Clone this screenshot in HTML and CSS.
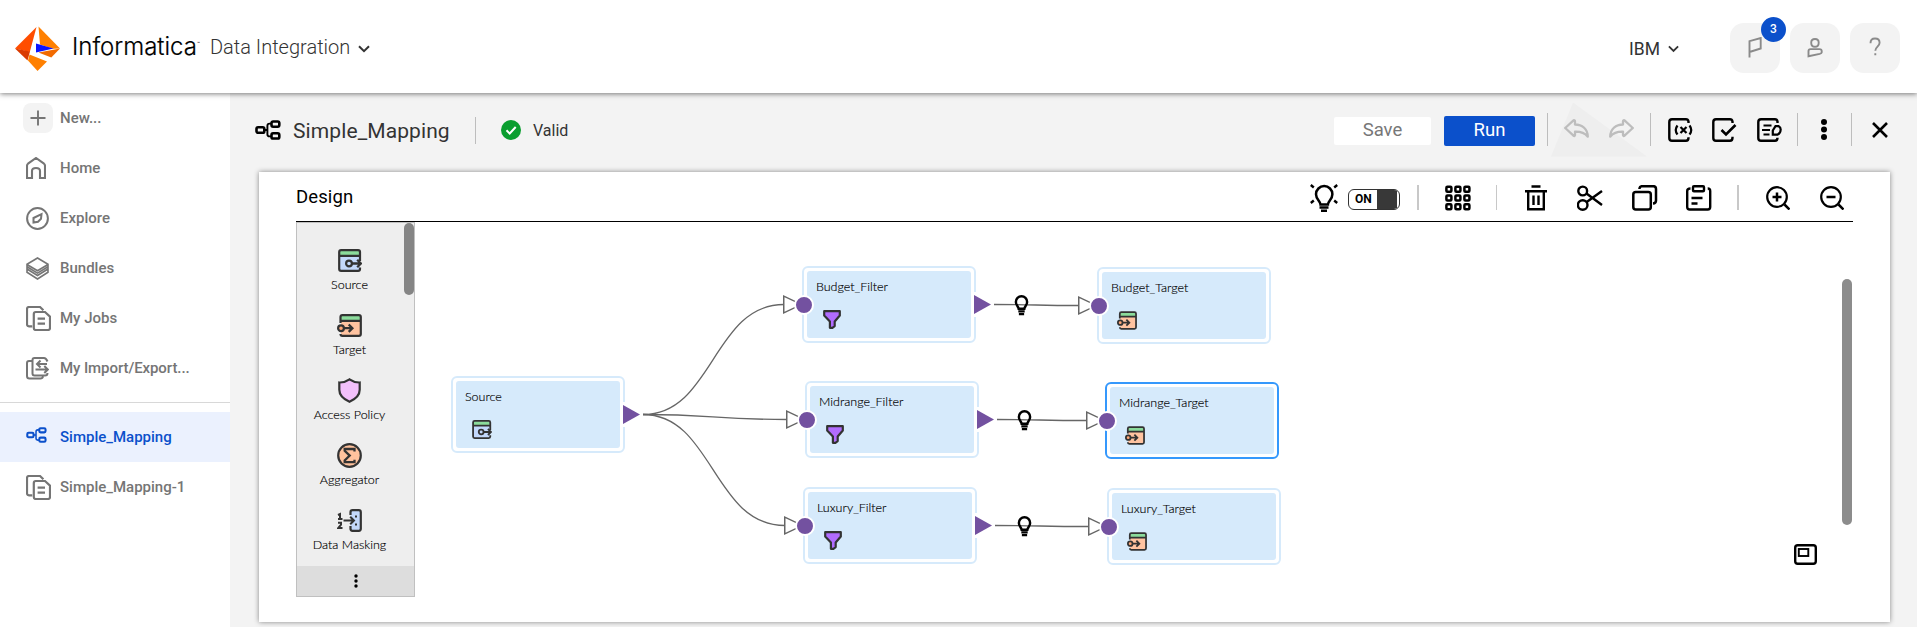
FILE: index.html
```
<!DOCTYPE html>
<html lang="en">
<head>
<meta charset="utf-8">
<title>Data Integration - Simple_Mapping</title>
<link rel="stylesheet" href="styles.css">
</head>
<body>
<svg class="defs" width="0" height="0">
  <symbol id="mapping" viewBox="0 0 26 20"><g fill="none" stroke="currentColor" stroke-width="2.600"><rect x="1.500" y="7.200" width="7.800" height="5.600" rx="1.600"/><rect x="16.500" y="1.500" width="7.800" height="5.200" rx="1.600"/><rect x="16.500" y="13.300" width="7.800" height="5.200" rx="1.600"/><path d="M9 10h3.400M16 3.600h-1.400q-2.200 0-2.200 2.200v8.400q0 2.200 2.200 2.200H16" stroke-width="1.900"/></g></symbol>
  <symbol id="docs" viewBox="0 0 25 25"><path d="M6.200 20.300H3q-2 0-2-2V3q0-2 2-2h11l3.400 3.200M7.800 8q0-2 2-2H19l5 4.600V22q0 2-2 2H9.800q-2 0-2-2zM11.600 12.700h7.400M11.600 17.700h7.400" fill="none" stroke="currentColor" stroke-width="2.200"/></symbol>
  <symbol id="source" viewBox="0 0 24 23"><rect x="1.200" y="1.200" width="20.600" height="20.600" rx="2" fill="#c3d8fb"/><path d="M1.500 1.500h20v5h-20z" fill="#8bdb9b"/><path d="M22 12V3q0-1.900-1.900-1.900H3.100Q1.200 1.100 1.200 3v17q0 1.900 1.900 1.900h17q1.900 0 1.900-1.900v-1.500M1.200 6.800h20.600" fill="none" stroke="#333" stroke-width="2.200"/><path d="M14 14.500h8.500M19.200 10.800l3.700 3.700-3.700 3.700" fill="none" stroke="#333" stroke-width="2.300"/><circle cx="11" cy="14.500" r="2.900" fill="#c3d8fb" stroke="#333" stroke-width="2.200"/></symbol>
  <symbol id="target" viewBox="0 0 25 23"><rect x="4" y="1.200" width="19.800" height="20.600" rx="2" fill="#ffc3a0"/><path d="M4 1.500h19.800v5H4z" fill="#8bdb9b"/><path d="M3.500 9V3q0-1.900 1.900-1.900h16.500q1.900 0 1.900 1.900v17q0 1.900-1.900 1.900H5.400q-1.900 0-1.900-1.900M3.500 6.800h20.300" fill="none" stroke="#333" stroke-width="2.200"/><path d="M7 14.200h8.500M11.700 10.500l3.700 3.700-3.700 3.700" fill="none" stroke="#333" stroke-width="2.300"/><circle cx="4" cy="14.200" r="2.900" fill="#ffa777" stroke="#333" stroke-width="2.200"/></symbol>
  <symbol id="funnel" viewBox="0 0 18 19"><path d="M1.200 1.200h15.600v4.300L11.700 11.500v4.600l-2.300 1.700H6.900v-6.300L1.200 5.500z" fill="#b26cff" stroke="#333" stroke-width="2.200" stroke-linejoin="round"/></symbol>
  <symbol id="bulb" viewBox="0 0 16 22"><path d="M5 14.500C4.800 12.200 2 10.800 2 7.200a6 6 0 0 1 12 0c0 3.600-2.800 5-3 7.300z" fill="none" stroke="#000" stroke-width="2.600"/><path d="M4.600 17.300h6.800M5.200 20.100h5.600" stroke="#000" stroke-width="2.400"/></symbol>
  <symbol id="chevron" viewBox="0 0 12 8"><path d="M1 1.200l5 5 5-5" fill="none" stroke="currentColor" stroke-width="2"/></symbol>
  <symbol id="undo" viewBox="0 0 25 21"><path d="M1.200 9L9.500 1.400q1.500-.6 1.500 1v3.100c7 .2 12.500 4 12.800 12.200-3.500-4.200-7-5.200-12.800-5v3.300q-.3 1.500-1.500.7z" fill="none" stroke="#bdbdbd" stroke-width="2.300" stroke-linejoin="round"/></symbol>
</svg>

<header class="topbar">
  <svg class="logo" viewBox="0 0 45 45"><path d="M21.500 1L0 22.500 14.800 26z" fill="#ff4d00"/><path d="M0 22.500L12.500 34.500l2.500-9z" fill="#d93a00"/><path d="M23.500 .5L45 22.500l-7 .3-13-4.300z" fill="#ff8000"/><path d="M13 34.500L22.500 45l9.500-9.500L14.500 28.500z" fill="#ff8000"/><path d="M23.500 26.500L45 22.500 36.300 31.500z" fill="#f26a00"/><path d="M21 17.500l17.500 5L21 26.500z" fill="#0a14ff"/></svg>
  <span class="brand">Informatica</span><span class="tm">™</span>
  <span class="product">Data Integration</span>
  <svg class="chev" width="12" height="8"><use href="#chevron"/></svg>
  <div class="account">
    <span class="org">IBM</span>
    <svg class="orgchev" width="11" height="8"><use href="#chevron"/></svg>
    <div class="hbtn"><svg width="14" height="21" viewBox="0 0 14 21"><path d="M1.500 20.500V4.200L12.700 1v10.500L1.500 15" fill="none" stroke="#8a8a8a" stroke-width="1.900"/></svg><span class="badge">3</span></div>
    <div class="hbtn"><svg width="16" height="21" viewBox="0 0 16 21"><path d="M8 2c2.400 0 3.700 1.500 3.700 3.700S10.300 9.800 8 9.800 4.200 8 4.200 5.700 5.600 2 8 2zM1.500 19.300v-5.200q0-2 2-2h9q2.200 0 2.200 2v1.500q0 .8-2 1.300z" fill="none" stroke="#8a8a8a" stroke-width="1.900"/></svg></div>
    <div class="hbtn"><svg width="14" height="20" viewBox="0 0 14 20"><path d="M2.500 6.200C2.500 3 4.300 1.500 7 1.500s4.600 1.700 4.600 4.300c0 3.600-4.300 4.100-4.300 8M7.300 16.300v2" fill="none" stroke="#8a8a8a" stroke-width="1.900"/></svg></div>
  </div>
</header>

<div class="body">
  <nav class="side">
    <a class="item"><span class="plus"><svg width="16" height="16" viewBox="0 0 16 16"><path d="M8 .5v15M.5 8h15" stroke="#757575" stroke-width="1.900"/></svg></span>New...</a>
    <a class="item"><svg width="20" height="22" viewBox="0 0 20 22"><path d="M1 9q0-1.500 1-2.300L10 1l8 5.700q1 .8 1 2.300v12h-5v-7q0-3-4-3t-4 3v7H1z" fill="none" stroke="#757575" stroke-width="2.100"/></svg>Home</a>
    <a class="item"><svg width="23" height="23" viewBox="0 0 23 23"><circle cx="11.500" cy="11.500" r="10.400" fill="none" stroke="#757575" stroke-width="2"/><path d="M7.500 15.500V11l8-3.800-.5 4.500-3 3z" fill="none" stroke="#757575" stroke-width="2"/></svg>Explore</a>
    <a class="item"><svg width="23" height="23" viewBox="0 0 23 23"><path d="M11.500 1L22 7.300v7.900L11.500 22 1 15.200V7.300zM1 7.500l10.500 6.300L22 7.500M1 12l10.500 6.500L22 12M1 9.700l10.500 6.400L22 9.700" fill="none" stroke="#757575" stroke-width="1.600"/></svg>Bundles</a>
    <a class="item"><svg width="25" height="25"><use href="#docs"/></svg>My Jobs</a>
    <a class="item"><svg width="23" height="23" viewBox="0 0 23 23"><path d="M5.500 4H3Q1 4 1 6v13q0 2.500 2.500 2.500h11q2 0 2.500-2M21.500 4.500Q20 1 18 1H8.500q-2 0-2 2v13.500q0 2 2 2H19q2.500 0 2.500-2.500M21 7H11M14.500 3.500L11 7l3.500 3.500M9.500 12.500h12M18.300 9l3.500 3.500-3.500 3.500" fill="none" stroke="#757575" stroke-width="2"/></svg><span class="tight">My Import/Export...</span></a>
    <div class="rule"></div>
    <a class="item active"><svg width="21" height="16"><use href="#mapping"/></svg>Simple_Mapping</a>
    <a class="item"><svg width="25" height="25"><use href="#docs"/></svg>Simple_Mapping-1</a>
  </nav>

  <main class="main">
    <div class="titlebar">
      <svg class="titleicon" width="26" height="20"><use href="#mapping"/></svg>
      <h1 class="title">Simple_Mapping</h1>
      <i class="sep tsep"></i>
      <svg class="ok" width="20" height="20" viewBox="0 0 20 20"><circle cx="10" cy="10" r="10" fill="#0a9e2f"/><path d="M5.500 10.300l3.200 3.200 6-6.500" fill="none" stroke="#fff" stroke-width="2"/></svg>
      <span class="valid">Valid</span>
      <div class="actions">
        <button class="save">Save</button>
        <button class="run">Run</button>
        <i class="sep"></i>
        <div class="history">
          <svg width="25" height="21"><use href="#undo"/></svg>
          <svg class="flip" width="25" height="21"><use href="#undo"/></svg>
        </div>
        <i class="sep"></i>
        <svg class="a1" width="25" height="24" viewBox="0 0 25 24"><path d="M20.500 5V3.500Q20 1.300 18 1.300H4Q1.300 1.300 1.300 4v16q0 2.700 2.700 2.700h14q2.500 0 2.500-3v-.5" fill="none" stroke="#000" stroke-width="2.400"/><path d="M9.500 7.500q-3.500 4.500 0 9M21.500 7.500q3.500 4.500 0 9M12.500 9l6 6M18.500 9l-6 6" fill="none" stroke="#000" stroke-width="2.200"/></svg>
        <svg class="a2" width="25" height="24" viewBox="0 0 25 24"><path d="M20.500 5V3.500Q20 1.300 18 1.300H4Q1.300 1.300 1.300 4v16q0 2.700 2.700 2.700h14q2.500 0 2.500-3v-1" fill="none" stroke="#000" stroke-width="2.400"/><path d="M9.500 12l4.500 4.500L23.500 7" fill="none" stroke="#000" stroke-width="2.600"/></svg>
        <svg class="a3" width="25" height="24" viewBox="0 0 25 24"><path d="M20.500 5V3.500Q20 1.300 18 1.300H4Q1.300 1.300 1.300 4v16q0 2.700 2.700 2.700h14q2.500 0 2.500-3" fill="none" stroke="#000" stroke-width="2.400"/><path d="M6.500 7.500h8M5 12h8M6.500 16.500h6M15.800 16.600V12.500l2.700-4.300h3.200q2 1 2 3.300-.3 4-3 5.100z" fill="none" stroke="#000" stroke-width="2.200"/></svg>
        <i class="sep s3"></i>
        <svg class="dots" width="6" height="21" viewBox="0 0 6 21"><circle cx="3" cy="3" r="3"/><circle cx="3" cy="10.500" r="3"/><circle cx="3" cy="18" r="3"/></svg>
        <i class="sep"></i>
        <svg class="close" width="16" height="16" viewBox="0 0 16 16"><path d="M1 1l14 14M15 1L1 15" stroke="#000" stroke-width="2.600"/></svg>
      </div>
    </div>

    <section class="panel">
      <div class="phead">
        <h2 class="design">Design</h2>
        <div class="tools">
          <svg width="28" height="28" viewBox="0 0 28 28"><path d="M10.500 20.500c0-3.500-4.500-5-4.500-10.200a8 8 0 0 1 16.400 0c0 5.200-4.500 6.700-4.500 10.200z" fill="none" stroke="#000" stroke-width="2.500"/><path d="M9.500 23.500h9M11 26.800h6M.8 1l3 2.500M27.200 1l-3 2.500M.8 19l3-2.500M27.200 19l-3-2.500" stroke="#000" stroke-width="2.400"/></svg>
          <div class="toggle"><span>ON</span><i></i></div>
          <i class="bar b1"></i>
          <svg width="26" height="26" viewBox="0 0 26 26"><g fill="none" stroke="#000" stroke-width="2.500"><rect x="1.400" y="1.700" width="5" height="5" rx="1"/><rect x="10.400" y="1.700" width="5" height="5" rx="1"/><rect x="19.400" y="1.700" width="5" height="5" rx="1"/><rect x="1.400" y="10.500" width="5" height="5" rx="1"/><rect x="10.400" y="10.500" width="5" height="5" rx="1"/><rect x="19.400" y="10.500" width="5" height="5" rx="1"/><rect x="1.400" y="19.300" width="5" height="5" rx="1"/><rect x="10.400" y="19.300" width="5" height="5" rx="1"/><rect x="19.400" y="19.300" width="5" height="5" rx="1"/></g></svg>
          <i class="bar b2"></i>
          <svg class="t1" width="22" height="26" viewBox="0 0 22 26"><path d="M6.500 1.500h9M0 6.300h22M3.200 6.300v18h15.600v-18M8.500 10.500v9.500M13.500 10.500v9.500" fill="none" stroke="#000" stroke-width="2.400"/></svg>
          <svg class="t2" width="26" height="26" viewBox="0 0 26 26"><g fill="none" stroke="#000" stroke-width="2.400"><circle cx="5.700" cy="6" r="4.400"/><circle cx="5.700" cy="20" r="4.800"/><path d="M9.500 8.500L25 20M9.700 17L25 6"/></g></svg>
          <svg class="t3" width="26" height="26" viewBox="0 0 26 26"><g fill="none" stroke="#000" stroke-width="2.500"><rect x="1.300" y="7" width="17.500" height="17.500" rx="2.500"/><path d="M7.500 4V3.200q.3-2 2.500-2h11.500Q24 1.200 24 4v11.500q0 2.800-3 3"/></g></svg>
          <svg class="t4" width="26" height="26" viewBox="0 0 26 26"><g fill="none" stroke="#000" stroke-width="2.400"><path d="M4.500 3.500Q1.200 3.500 1.200 6v16q0 2.500 2.500 2.500h18q2.500 0 2.500-2.500V6q0-2.500-2.500-2.500M5.500 13h11M5.500 18.500h6"/><rect x="7" y="1.300" width="11" height="5" rx="1"/></g></svg>
          <i class="bar b3"></i>
          <svg class="z1" width="24" height="24" viewBox="0 0 24 24"><path d="M18.500 18.500l5 5M6.500 11h9M11 6.500v9" stroke="#000" stroke-width="2.500"/><circle cx="11" cy="11" r="9.800" fill="none" stroke="#000" stroke-width="2.200"/></svg>
          <svg class="z2" width="24" height="24" viewBox="0 0 24 24"><path d="M18.500 18.500l5 5M6.500 11h9" stroke="#000" stroke-width="2.500"/><circle cx="11" cy="11" r="9.800" fill="none" stroke="#000" stroke-width="2.200"/></svg>
        </div>
      </div>

      <div class="work">
        <aside class="palette">
          <div class="plist">
            <div class="pitem"><svg width="24" height="23"><use href="#source"/></svg><span>Source</span></div>
            <div class="pitem"><svg width="25" height="23"><use href="#target"/></svg><span>Target</span></div>
            <div class="pitem"><svg width="23" height="25" viewBox="0 0 23 25"><path d="M11.500 1.300q5 3.400 10.200 3.200v7.300q0 7.500-10.200 12-10.200-4.500-10.200-12V4.500Q6.500 4.700 11.500 1.300z" fill="#f3c0fb" stroke="#333" stroke-width="2.200"/></svg><span>Access Policy</span></div>
            <div class="pitem"><svg width="25" height="25" viewBox="0 0 25 25"><circle cx="12.500" cy="12.500" r="11.300" fill="#ffc29d" stroke="#333" stroke-width="2.200"/><path d="M17.500 8.500V6H7.700v1.800l5 4.800-5 4.800v1.800h9.800v-2.500" fill="none" stroke="#333" stroke-width="2.300"/></svg><span>Aggregator</span></div>
            <div class="pitem"><svg width="25" height="23" viewBox="0 0 25 23"><path d="M13.500 6V3.200q0-2 2-2h6.300q2 0 2 2v16.600q0 2-2 2h-6.300q-2 0-2-2V17" fill="#c3d8fb" stroke="#333" stroke-width="2.200"/><path d="M6.500 11.500H17M13.200 7.700l3.800 3.800-3.800 3.800M1 6l2-1v5M1 9.900h4.500M1 13.700h3v2l-2.600 3.200H5.500M18 7.500h2M18 15.500h2" fill="none" stroke="#333" stroke-width="2"/></svg><span>Data Masking</span></div>
          </div>
          <div class="thumb"></div>
          <div class="more"><svg width="4" height="14" viewBox="0 0 4 14"><circle cx="2" cy="2" r="1.700"/><circle cx="2" cy="7" r="1.700"/><circle cx="2" cy="12" r="1.700"/></svg></div>
        </aside>

        <!-- Diagram canvas: flow links and transformation nodes -->
        <div class="canvas">
          <svg class="links" viewBox="416 222 1438 400" width="1438" height="400">
            <g fill="none" stroke="#666" stroke-width="1.300">
              <path d="M643 414.500C713 414.500 713 304.500 784 304.500"/>
              <path d="M643 414.500C713 414.500 713 419.500 787 419.500"/>
              <path d="M643 414.500C713 414.500 713 525.500 785 525.500"/>
              <path d="M994 304.500C1036 304.500 1036 305.500 1079 305.500"/>
              <path d="M997 419.500C1040 419.500 1040 420.500 1087 420.500"/>
              <path d="M995 525.500C1040 525.500 1040 526.500 1089 526.500"/>
            </g>
          </svg>
          <div class="node n1"><span>Source</span><svg width="20" height="19"><use href="#source"/></svg><i class="out"></i></div>
          <div class="node n2"><span>Budget_Filter</span><svg width="18" height="19"><use href="#funnel"/></svg><i class="in"></i><i class="port"></i><i class="out"></i></div>
          <div class="node n3"><span>Midrange_Filter</span><svg width="18" height="19"><use href="#funnel"/></svg><i class="in"></i><i class="port"></i><i class="out"></i></div>
          <div class="node n4"><span>Luxury_Filter</span><svg width="18" height="19"><use href="#funnel"/></svg><i class="in"></i><i class="port"></i><i class="out"></i></div>
          <div class="node n5 tgt"><span>Budget_Target</span><svg width="20" height="19"><use href="#target"/></svg><i class="in"></i><i class="port"></i></div>
          <div class="node n6 tgt selected"><span>Midrange_Target</span><svg width="20" height="19"><use href="#target"/></svg><i class="in"></i><i class="port"></i></div>
          <div class="node n7 tgt"><span>Luxury_Target</span><svg width="20" height="19"><use href="#target"/></svg><i class="in"></i><i class="port"></i></div>
          <svg class="hint h1" width="15" height="21"><use href="#bulb"/></svg>
          <svg class="hint h2" width="15" height="21"><use href="#bulb"/></svg>
          <svg class="hint h3" width="15" height="21"><use href="#bulb"/></svg>
          <svg class="minimap" width="23" height="21" viewBox="0 0 23 21"><rect x="1.200" y="1.200" width="20.600" height="18.600" rx="2.500" fill="none" stroke="#000" stroke-width="2.400"/><rect x="4.800" y="5" width="9.500" height="7" fill="none" stroke="#000" stroke-width="1.900"/></svg>
          <div class="vscroll"></div>
        </div>
      </div>
    </section>
  </main>
</div>
</body>
</html>
```
FILE: styles.css
```
* { box-sizing: border-box; }
body { margin: 0; width: 1917px; height: 627px; overflow: hidden; background: #f3f3f3; font-family: Roboto, sans-serif; color: #333; }
svg { display: block; flex: none; }
.defs { position: absolute; }

.topbar { position: relative; z-index: 2; height: 93px; display: flex; align-items: center; padding: 0 17px 0 15px; background: #fff; box-shadow: 0 1px 5px rgba(0,0,0,.5); }
.logo { width: 45px; height: 45px; margin-top: 4px; }
.brand { width: 125px; margin: 1px 0 0 12px; font: 350 24px/30px Inter, sans-serif; letter-spacing: 0; color: #000; white-space: nowrap; -webkit-text-stroke: .2px #000; }
.tm { width: 13px; font-size: 5px; line-height: 18px; margin-top: -8px; color: #000; }
.product { width: 148px; font-weight: 300; font-size: 20px; line-height: 24px; white-space: nowrap; color: #333; margin-top: 1px; }
.chev { margin-top: 5px; }
.account { margin-left: auto; display: flex; align-items: center; }
.org { width: 39px; font-size: 17.500px; line-height: 22px; margin-top: 4px; }
.orgchev { margin: 5px 51px 0 0; }
.hbtn { position: relative; width: 50px; height: 50px; margin-top: 3px; border-radius: 14px; background: #f3f3f3; display: flex; align-items: center; justify-content: center; }
.hbtn + .hbtn { margin-left: 10px; }
.hbtn svg { margin-top: -2px; }
.badge { position: absolute; left: 31px; top: -6px; width: 25px; height: 25px; border-radius: 50%; background: #0b50cb; color: #fff; font-weight: 500; font-size: 12px; line-height: 25px; text-align: center; }

.body { display: flex; height: 534px; }
.side { width: 230px; background: #fff; flex: none; }
.item { height: 50px; display: grid; grid-template-columns: 34px auto; justify-content: start; align-items: center; padding-left: 26px; font-size: 15px; font-weight: 500; color: #757575; white-space: nowrap; }
.tight { letter-spacing: -.08px; }
.plus { width: 30px; height: 30px; margin-left: -3px; border-radius: 8px; background: #f3f3f3; display: flex; align-items: center; justify-content: center; }
.rule { height: 1px; margin: 9px 0; background: #d8d8d8; }
.active { background: #ebf1fe; color: #0b50cb; }
.active svg { margin-top: -4px; }

.main { width: 1687px; padding: 0 27px 0 29px; }
.titlebar { height: 79px; display: flex; align-items: center; padding: 0 2px 5px 0; margin-left: -4px; }
.titleicon { color: #000; margin-top: -1px; }
.title { width: 182px; margin: 2px 0 0 12px; font-size: 21px; line-height: 26px; font-weight: 400; letter-spacing: .1px; color: #333; }
.sep { width: 1px; height: 33px; background: #bdbdbd; flex: none; }
.tsep { height: 27px; }
.ok { margin-left: 25px; }
.valid { margin: 1px 0 0 12px; font-size: 16px; line-height: 20px; }
.actions { margin-left: auto; margin-top: -1px; display: flex; align-items: center; }
.save, .run { border: 0; padding: 0 0 3px; border-radius: 2px; font: 400 18.500px/24px Roboto, sans-serif; margin-top: 3px; }
.save { width: 97px; height: 28px; background: #fff; color: #777; }
.run { width: 91px; height: 30px; margin-left: 13px; margin-right: 12px; background: #0b50cb; color: #fff; }
.history { position: relative; width: 102px; height: 54px; padding: 0 14px 0 16px; display: flex; align-items: center; gap: 20px; }
.history::before { content: ""; position: absolute; left: 3px; top: 0; width: 96px; height: 54px; background: #eee; clip-path: polygon(23% 0, 100% 100%, 0 100%); }
.history svg { position: relative; }
.flip { transform: scaleX(-1); }
.a1 { margin-left: 17px; }
.a2 { margin-left: 19px; }
.a3 { margin-left: 20px; }
.s3 { margin-left: 15px; }
.dots { margin: 0 24px 0 23px; }
.close { margin-left: 20px; }

.panel { width: 1631px; height: 450px; padding: 0 37px; background: #fff; box-shadow: 0 0 5px rgba(0,0,0,.45); }
.phead { height: 50px; border-bottom: 1px solid #000; display: flex; justify-content: space-between; align-items: center; }
.design { margin: 1px 0 0; font-size: 18.500px; font-weight: 400; line-height: 22px; letter-spacing: .1px; color: #000; }
.tools { display: flex; align-items: center; padding: 2px 9px 0 0; }
.toggle { width: 52px; height: 21px; margin: 3px 11px 0 10px; border: 1px solid #333; border-radius: 6px; display: flex; overflow: hidden; font: 700 12px/18px Roboto, sans-serif; color: #000; padding-left: 6px; }
.toggle i { width: 20px; height: 20px; margin-left: 4px; background: #383838; }
.toggle span { width: 18px; }
.bar { width: 2px; height: 25px; margin-left: 6px; background: #c8c8c8; flex: none; }
.b1 { margin-right: 26px; }
.b2 { width: 1px; margin-left: 25px; }
.t1 { margin-left: 28px; }
.t2 { margin-left: 30px; }
.t3 { margin-left: 29px; }
.t4 { margin-left: 28px; }
.b3 { margin-left: 25px; }
.z1 { margin-left: 27px; }
.z2 { margin-left: 30px; }

.work { display: flex; height: 400px; }
.palette { position: relative; width: 119px; height: 375px; border: 1px solid #c0c0c0; background: #eee; display: flex; flex-direction: column; flex: none; }
.plist { height: 343px; padding: 22px 12px 0 0; }
.pitem { height: 65px; display: flex; flex-direction: column; align-items: center; font: 300 12.500px/20px Lato, sans-serif; color: #000; white-space: nowrap; -webkit-text-stroke: .15px #000; }
.pitem svg { margin: auto 0; }
.pitem span { height: 35px; }
.thumb { position: absolute; right: 0; top: 0; width: 10px; height: 72px; border-radius: 5px; background: #858585; }
.more { height: 30px; background: #ddd; display: flex; align-items: center; justify-content: center; }

.canvas { position: relative; flex: 1; }
.links { position: absolute; left: 1px; top: 0; }
.node { position: absolute; width: 174px; height: 77px; border: 2px solid #d6eafb; border-radius: 6px; background: #fff; padding: 11px 0 0 12px; font: 300 12.500px/16px Lato, sans-serif; color: #000; }
.node::before { content: ""; position: absolute; left: 3px; top: 3px; right: 3px; bottom: 3px; border-radius: 3px; background: #d6eafb; }
.node span { position: relative; display: block; white-space: nowrap; -webkit-text-stroke: .15px #000; }
.node svg { position: relative; margin: 15px 0 0 7px; }
.node.selected { border-color: #3598fc; }
.in { position: absolute; left: -21px; top: 27px; width: 20px; height: 19px; background: #666; clip-path: polygon(0 0, 100% 50%, 0 100%); }
.in::before { content: ""; position: absolute; inset: 0; background: #fff; clip-path: polygon(1.500px 2.200px, 17px 50%, 1.500px 16.800px); }
.port { position: absolute; left: -10.500px; top: 26.500px; width: 20px; height: 20px; border: 2px solid #fff; border-radius: 50%; background: #7351a0; }
.out { position: absolute; left: 169px; top: 24px; width: 5px; height: 25px; background: #fff; }
.out::before { content: ""; position: absolute; left: 1px; top: 3px; width: 17px; height: 19px; background: #7351a0; clip-path: polygon(0 0, 100% 50%, 0 100%); }
.n1 { left: 36px; top: 154px; }
.n2 { left: 387px; top: 44px; }
.n3 { left: 390px; top: 159px; }
.n4 { left: 388px; top: 265px; }
.n5 { left: 682px; top: 45px; }
.n6 { left: 690px; top: 160px; }
.n7 { left: 692px; top: 266px; }
.node.tgt svg { margin-left: 6px; }
.hint { position: absolute; }
.h1 { left: 599px; top: 73px; }
.h2 { left: 602px; top: 188px; }
.h3 { left: 602px; top: 294px; }
.minimap { position: absolute; left: 1379px; top: 322px; }
.vscroll { position: absolute; left: 1427px; top: 57px; width: 10px; height: 246px; border-radius: 5px; background: #8c8c8c; }
```
